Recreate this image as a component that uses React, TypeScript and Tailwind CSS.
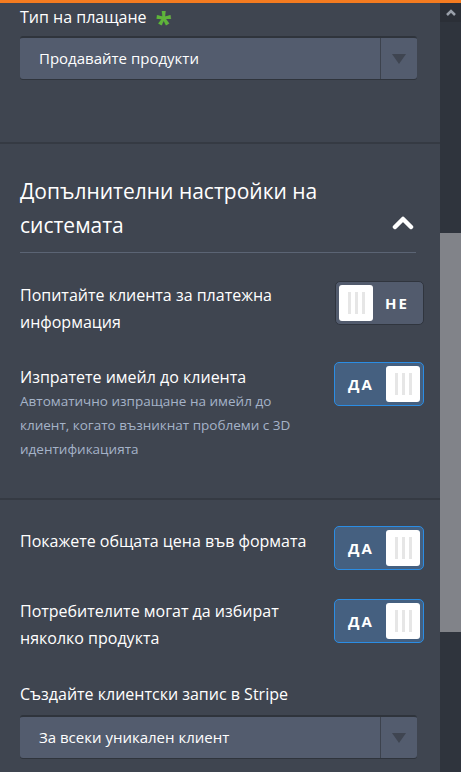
import React from 'react';

function Grip() {
  return (
    <div className="flex gap-[4px]">
      <span className="w-[3px] h-[22px] bg-[#e6e6e6]" />
      <span className="w-[3px] h-[22px] bg-[#e6e6e6]" />
      <span className="w-[3px] h-[22px] bg-[#e6e6e6]" />
    </div>
  );
}

function Toggle({ on }: { on: boolean }) {
  if (on) {
    return (
      <div className="w-[90px] h-[44px] rounded-[5px] border border-[#2b8de4] bg-[#456080] flex items-center justify-between pl-[13px] pr-[3px] shrink-0">
        <span className="text-white font-bold text-[15px] tracking-[2px]">ДА</span>
        <div className="w-[34px] h-[36px] bg-white rounded-[3px] flex items-center justify-center">
          <Grip />
        </div>
      </div>
    );
  }
  return (
    <div className="w-[89px] h-[44px] rounded-[5px] border border-[#30353e] bg-[#525b6d] flex items-center justify-between pl-[3px] pr-[14px] shrink-0">
      <div className="w-[34px] h-[36px] bg-white rounded-[3px] flex items-center justify-center">
        <Grip />
      </div>
      <span className="text-white font-bold text-[15px] tracking-[2px]">НЕ</span>
    </div>
  );
}

function Select({ value }: { value: string }) {
  return (
    <div className="h-[43px] w-[397px] rounded-[3px] bg-[#535c6e] border-t-2 border-[#2f343c] shadow-[0_1px_0_#2f343c] flex">
      <div className="flex-1 flex items-center pl-[19px] text-[15px] text-white">{value}</div>
      <div className="w-[37px] border-l border-[#3c424d] flex items-center justify-center">
        <span className="w-0 h-0 border-l-[7px] border-r-[7px] border-t-[10px] border-l-transparent border-r-transparent border-t-[#3f4551]" />
      </div>
    </div>
  );
}

export default function App() {
  return (
    <div className="w-[461px] h-[772px] overflow-hidden flex bg-[#3f4550] border-t-[3px] border-[#f47b20]" style={{ fontFamily: '"Open Sans", "Noto Sans", sans-serif' }}>
      <div className="w-[440px] flex flex-col">
        <section className="h-[141px] border-b-2 border-[#353a43] px-[20px]">
          <div className="flex items-center gap-[9px] h-[28px] text-[16px] text-white">
            <span>Тип на плащане</span>
            <span className="text-[#5fb43a] text-[30px] font-bold leading-none mt-[12px]">*</span>
          </div>
          <div className="mt-[5px]">
            <Select value="Продавайте продукти" />
          </div>
        </section>

        <section className="h-[356px] border-b-2 border-[#353a43] px-[20px] pt-[30px]">
          <div className="flex items-end justify-between pr-[4px] pb-[10px] border-b border-[#5b6474] w-[396px]">
            <h2 className="text-[21px] leading-[34px] text-white font-normal">Допълнителни настройки на<br />системата</h2>
            <svg width="22" height="16" viewBox="0 0 22 16" className="mb-[11px] mr-[-2px]">
              <path d="M3 12 L11 4 L19 12" fill="none" stroke="white" strokeWidth="4.5" strokeLinecap="round" strokeLinejoin="round" />
            </svg>
          </div>
          <div className="flex justify-between items-start mt-[28px] w-[404px]">
            <p className="text-[16px] leading-[27px] text-white mt-[1px]">Попитайте клиента за платежна<br />информация</p>
            <Toggle on={false} />
          </div>
          <div className="flex justify-between items-start mt-[26px] w-[404px]">
            <div className="pt-[3px]">
              <p className="text-[16px] leading-[24px] text-white">Изпратете имейл до клиента</p>
              <p className="text-[13.5px] leading-[24px] text-[#a5b3c8]">Автоматично изпращане на имейл до<br />клиент, когато възникнат проблеми с 3D<br />идентификацията</p>
            </div>
            <Toggle on={true} />
          </div>
        </section>

        <section className="px-[20px] pt-[26px]">
          <div className="flex justify-between items-start w-[404px]">
            <p className="text-[16px] leading-[27px] text-white mt-[2px]">Покажете общата цена във формата</p>
            <Toggle on={true} />
          </div>
          <div className="flex justify-between items-start mt-[29px] w-[404px]">
            <p className="text-[16px] leading-[27px] text-white mt-[-1px]">Потребителите могат да избират<br />няколко продукта</p>
            <Toggle on={true} />
          </div>
          <p className="text-[16px] leading-[27px] text-white mt-[29px]">Създайте клиентски запис в Stripe</p>
          <div className="mt-[7px]">
            <Select value="За всеки уникален клиент" />
          </div>
        </section>
      </div>

      <div className="w-[21px] bg-[#2f343d] flex flex-col">
        <div className="h-[19px] bg-[#2b2f37] flex items-center justify-center">
          <svg width="12" height="8" viewBox="0 0 12 8">
            <path d="M2 6 L6 2 L10 6" fill="none" stroke="#9aa0aa" strokeWidth="2.5" />
          </svg>
        </div>
        <div className="h-[211px]" />
        <div className="h-[399px] bg-[#818389]" />
      </div>
    </div>
  );
}
